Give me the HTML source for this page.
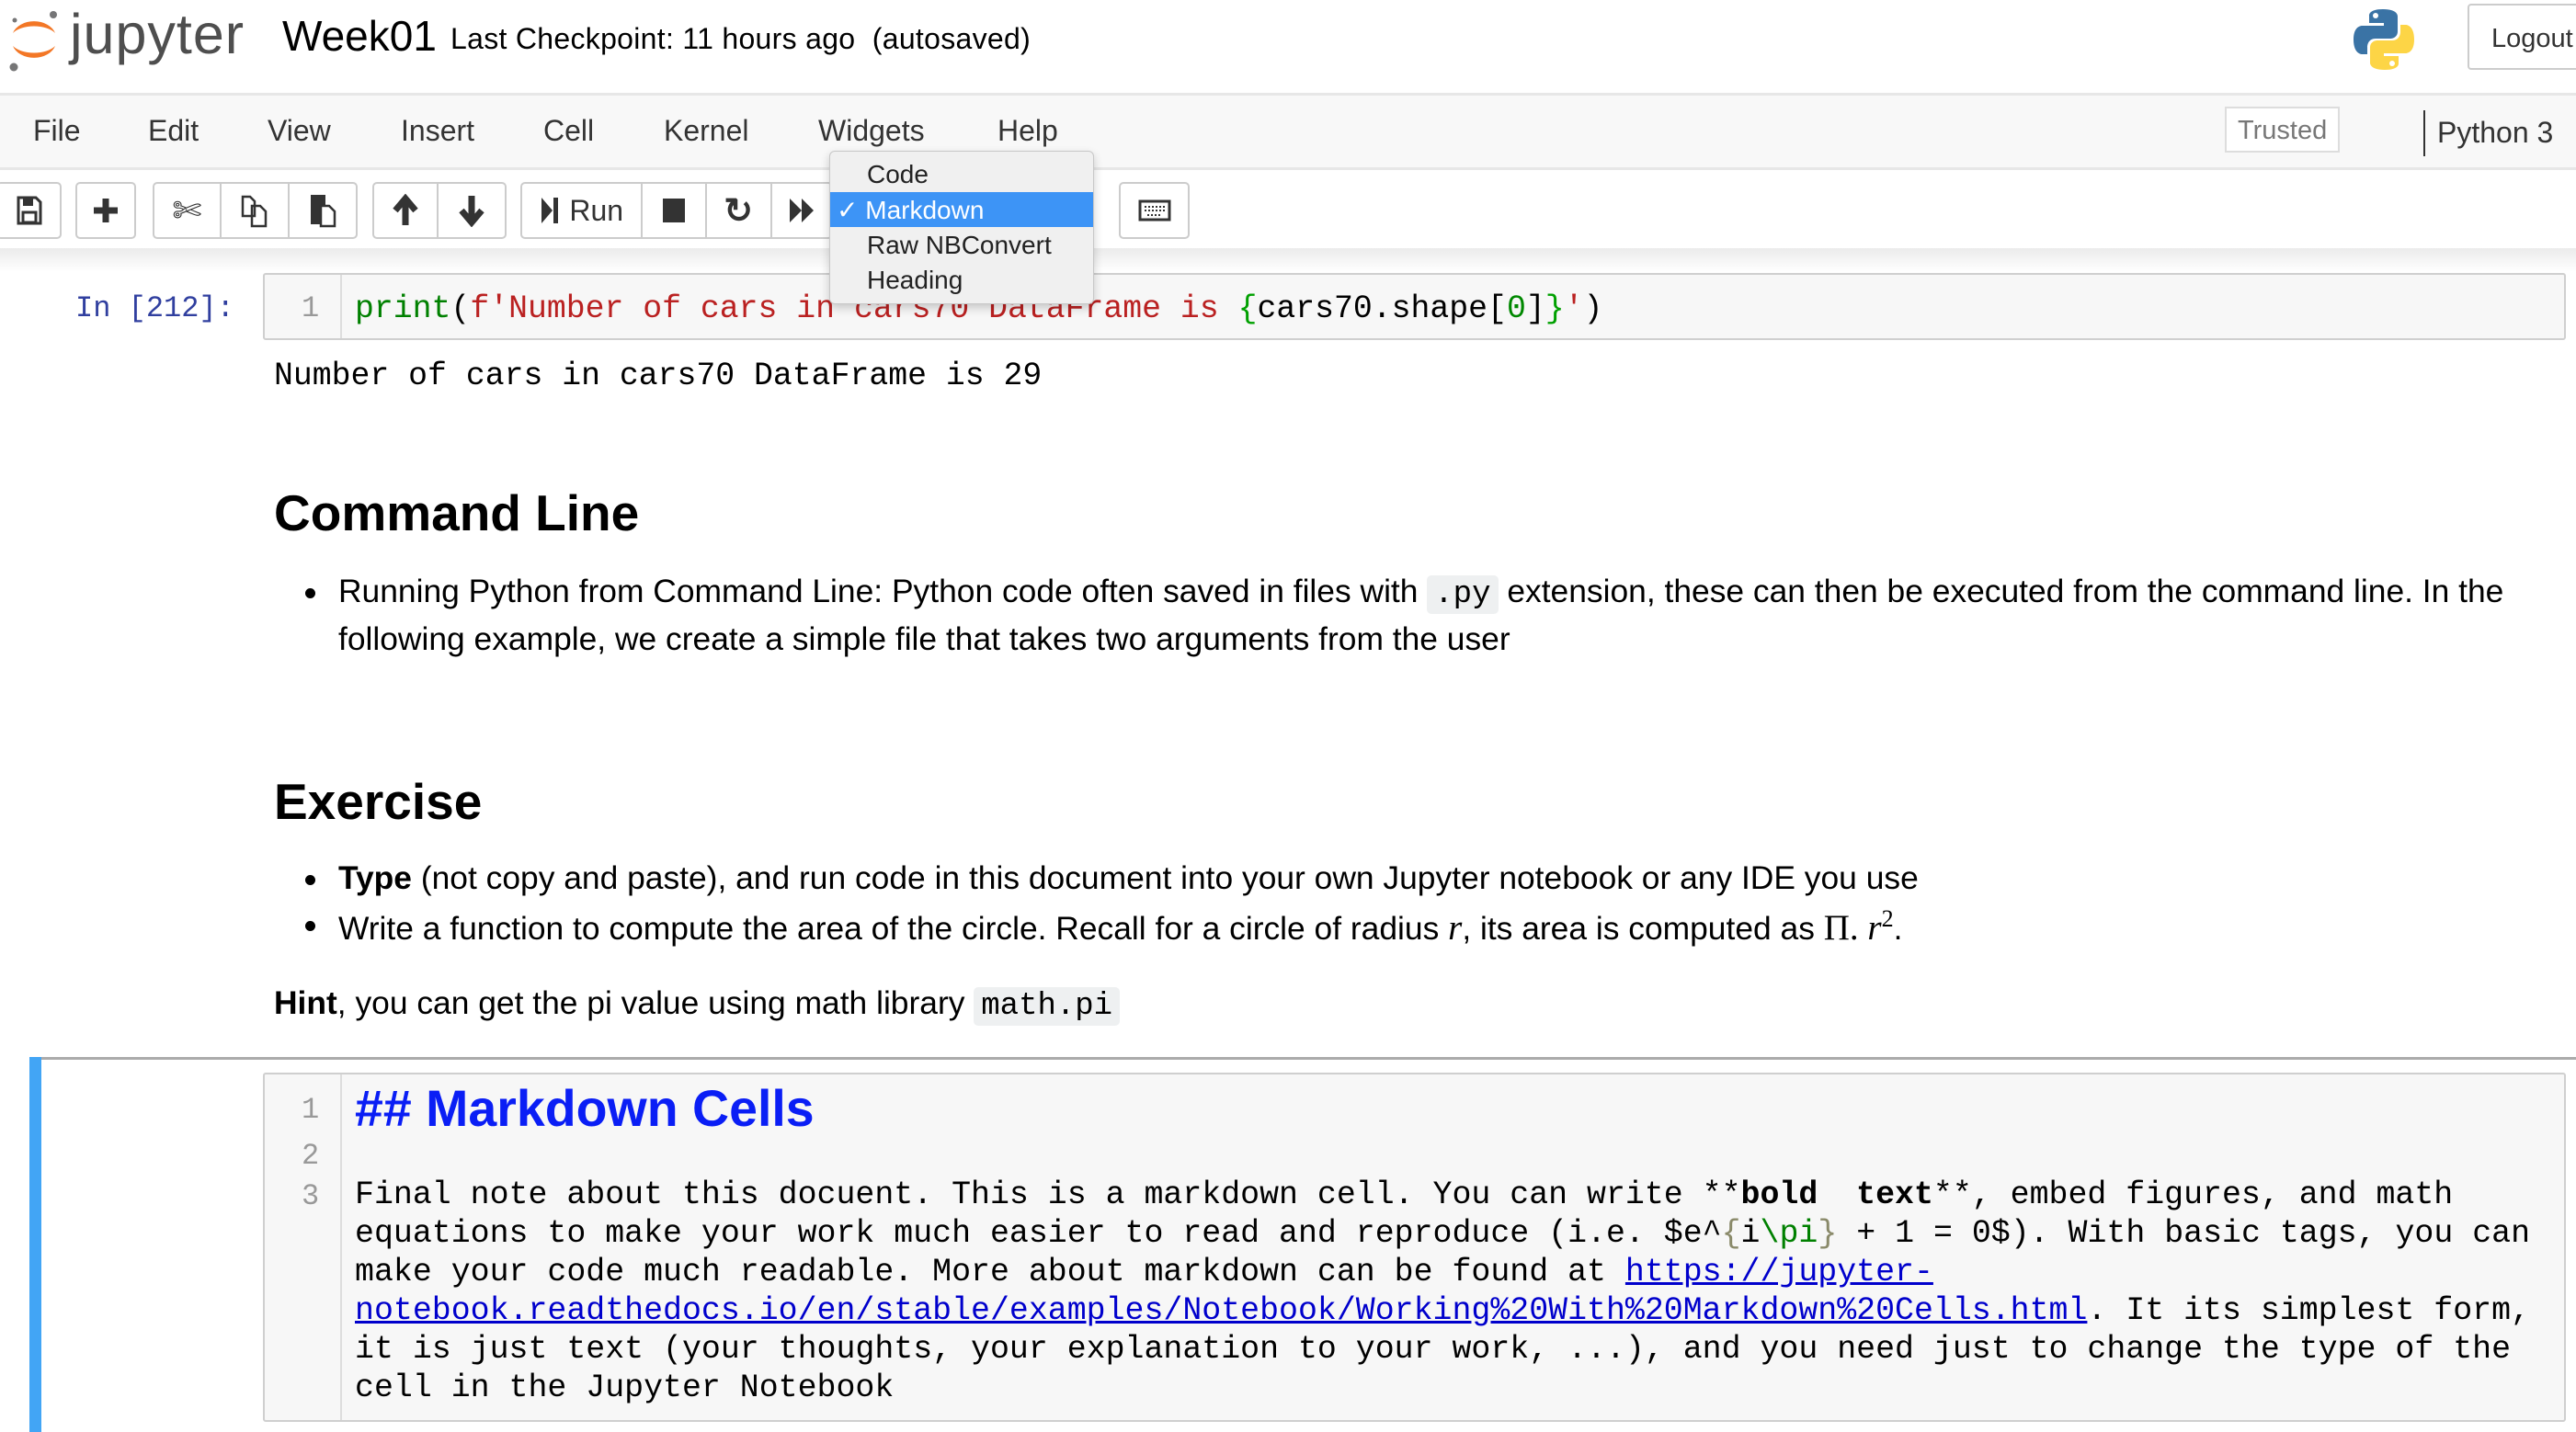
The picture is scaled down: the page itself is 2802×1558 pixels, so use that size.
<!DOCTYPE html>
<html><head><meta charset="utf-8"><style>
*{margin:0;padding:0;box-sizing:border-box}
body{width:2802px;height:1558px;overflow:hidden;background:#fff;font-family:"Liberation Sans",Arial,sans-serif;color:#000;position:relative}
.a{position:absolute;white-space:nowrap}
.mono{font-family:"Liberation Mono",monospace}
.menu{font-size:32px;color:#333;top:124px}
.grp{position:absolute;top:198px;height:62px;border:2px solid #ccc;border-radius:5px;background:#fff;display:flex}
.grp div{height:100%;border-right:2px solid #ccc;display:flex;align-items:center;justify-content:center}
.grp div:last-child{border-right:none}
.b{font-size:35.4px;color:#000}
.h{font-size:55px;font-weight:bold}
.dot{position:absolute;width:11px;height:11px;border-radius:50%;background:#000}
.code{background:#eef0f1;border-radius:5px;padding:2px 8px;font-family:"Liberation Mono",monospace;font-size:34px}
.ml{font-size:34.9px;left:386px}
</style></head><body>

<svg class="a" style="left:6px;top:6px" width="62" height="72" viewBox="0 0 62 72">
<path d="M8 30 A24 18 0 0 1 54 30 A26 14 0 0 0 8 30Z" fill="#f37726"/>
<path d="M8 44 A24 18 0 0 0 54 44 A26 14 0 0 1 8 44Z" fill="#f37726"/>
<circle cx="52" cy="10" r="4" fill="#767677"/><circle cx="9" cy="67" r="4.5" fill="#767677"/><circle cx="10" cy="16" r="2.5" fill="#767677"/>
</svg>
<div class="a" style="left:76px;top:2px;font-size:61px;color:#4e4e4e;letter-spacing:1px">jupyter</div>
<div class="a" style="left:307px;top:12px;font-size:46px">Week01</div>
<div class="a" style="left:490px;top:24px;font-size:32px;letter-spacing:0.3px">Last Checkpoint: 11 hours ago &nbsp;(autosaved)</div>
<svg class="a" style="left:2558px;top:8px" width="70" height="70" viewBox="0 0 70 70">
<path d="M34 2C18 2 19 9 19 9v8h16v3H12S2 19 2 35s9 16 9 16h6v-8s0-9 9-9h16s8 0 8-8V10S51 2 34 2z" fill="#3a73a5"/>
<circle cx="26" cy="9" r="3" fill="#fff"/>
<path d="M36 68c16 0 15-7 15-7v-8H35v-3h23s10 1 10-15-9-16-9-16h-6v8s0 9-9 9H28s-8 0-8 8v16s-1 8 16 8z" fill="#fdd546"/>
<circle cx="44" cy="61" r="3" fill="#fff"/>
</svg>
<div class="a" style="left:2684px;top:4px;width:140px;height:72px;border:2px solid #ccc;border-radius:4px;font-size:29px;padding:20px 0 0 24px;color:#333">Logout</div>

<div class="a" style="left:0;top:101px;width:2802px;height:84px;background:#f8f8f8;border-top:3px solid #e7e7e7;border-bottom:3px solid #e7e7e7"></div>
<div class="a menu" style="left:36px">File</div>
<div class="a menu" style="left:161px">Edit</div>
<div class="a menu" style="left:291px">View</div>
<div class="a menu" style="left:436px">Insert</div>
<div class="a menu" style="left:591px">Cell</div>
<div class="a menu" style="left:722px">Kernel</div>
<div class="a menu" style="left:890px">Widgets</div>
<div class="a menu" style="left:1085px">Help</div>
<div class="a" style="left:2420px;top:116px;width:125px;height:50px;border:2px solid #ddd;background:#fff;font-size:29px;color:#777;padding:8px 0 0 12px">Trusted</div>
<div class="a" style="left:2636px;top:120px;width:2px;height:50px;background:#333"></div>
<div class="a" style="left:2651px;top:126px;font-size:32px;color:#333">Python 3</div>

<div class="a" style="left:0;top:270px;width:2802px;height:26px;background:linear-gradient(#ebebeb,#fff)"></div>
<div class="grp" style="left:-4px;width:71px"><div style="width:71px"><svg width="28" height="32" viewBox="0 0 28 32"><path d="M2 2h19l5 5v23H2z" fill="none" stroke="#333" stroke-width="3"/><rect x="7" y="3" width="11" height="8" fill="#333"/><rect x="7" y="18" width="14" height="11" fill="none" stroke="#333" stroke-width="3"/></svg></div></div>
<div class="grp" style="left:82px;width:66px"><div style="width:66px"><svg width="30" height="30"><path d="M15 2v26M2 15h26" stroke="#333" stroke-width="7"/></svg></div></div>
<div class="grp" style="left:166px;width:223px"><div style="width:74px;font-size:38px;color:#333">✄</div><div style="width:76px"><svg width="30" height="38" viewBox="0 0 30 38"><path d="M2 4h8l5 5v16H2z M12 14h9l6 6v16H12z" fill="#fff" stroke="#333" stroke-width="2.5"/></svg></div><div style="width:73px"><svg width="30" height="38" viewBox="0 0 30 38"><rect x="2" y="2" width="16" height="32" fill="#333"/><path d="M13 14h9l6 6v16H13z" fill="#fff" stroke="#333" stroke-width="2.5"/></svg></div></div>
<div class="grp" style="left:405px;width:146px"><div style="width:72px"><svg width="30" height="36"><path d="M15 34V8M4 18L15 5l11 13" stroke="#333" stroke-width="7" fill="none"/></svg></div><div style="width:74px"><svg width="30" height="36"><path d="M15 2v26M4 18l11 13 11-13" stroke="#333" stroke-width="7" fill="none"/></svg></div></div>
<div class="grp" style="left:566px;width:340px"><div style="width:133px;font-size:32px;color:#333"><svg width="22" height="34" style="margin-right:10px"><path d="M2 3l12 14L2 31z" fill="#333"/><rect x="15" y="3" width="5" height="28" fill="#333"/></svg>Run</div><div style="width:70px"><svg width="28" height="30"><rect x="2" y="2" width="24" height="26" fill="#333"/></svg></div><div style="width:72px;font-size:38px;font-weight:bold;color:#333">↻</div><div style="width:65px"><svg width="30" height="30"><path d="M2 2l13 13L2 28zM15 2l13 13-13 13z" fill="#333"/></svg></div></div>
<div class="grp" style="left:1217px;width:77px"><div style="width:77px"><svg width="36" height="24"><rect x="2" y="2" width="32" height="20" fill="none" stroke="#333" stroke-width="3"/><path d="M7 8h22M7 12h22M10 17h16" stroke="#333" stroke-width="2" stroke-dasharray="2 2"/></svg></div></div>

<div class="a mono" style="left:82px;top:317px;font-size:32px;color:#303f9f">In [212]:</div>
<div class="a" style="left:286px;top:297px;width:2505px;height:73px;background:#f7f7f7;border:2px solid #cfcfcf;border-radius:3px"></div>
<div class="a" style="left:370px;top:299px;width:2px;height:69px;background:#ddd"></div>
<div class="a mono" style="left:328px;top:317px;font-size:32px;color:#999">1</div>
<div class="a mono" style="left:386px;top:317px;font-size:34.8px"><span style="color:#008000">print</span>(<span style="color:#ba2121">f'Number of cars in cars70 DataFrame is </span><span style="color:#00a000">{</span>cars70.shape[<span style="color:#008800">0</span>]<span style="color:#00a000">}</span><span style="color:#ba2121">'</span>)</div>
<div class="a mono" style="left:298px;top:390px;font-size:34.8px">Number of cars in cars70 DataFrame is 29</div>

<div class="a" style="left:902px;top:164px;width:288px;height:167px;background:#f0f0f0;border:1px solid #c8c8c8;border-radius:6px;box-shadow:0 4px 10px rgba(0,0,0,.2)"></div>
<div class="a" style="left:903px;top:209px;width:286px;height:38px;background:#3d94f6"></div>
<div class="a" style="left:943px;top:174px;font-size:28px;color:#222">Code</div>
<div class="a" style="left:910px;top:212px;font-size:28px;color:#fff">✓ Markdown</div>
<div class="a" style="left:943px;top:251px;font-size:28px;color:#222">Raw NBConvert</div>
<div class="a" style="left:943px;top:289px;font-size:28px;color:#222">Heading</div>

<div class="a h" style="left:298px;top:526px">Command Line</div>
<div class="dot" style="left:332px;top:640px"></div>
<div class="a b" style="left:368px;top:623px">Running Python from Command Line: Python code often saved in files with <span class="code">.py</span> extension, these can then be executed from the command line. In the</div>
<div class="a b" style="left:368px;top:675px">following example, we create a simple file that takes two arguments from the user</div>
<div class="a h" style="left:298px;top:840px">Exercise</div>
<div class="dot" style="left:332px;top:952px"></div>
<div class="a b" style="left:368px;top:935px"><b>Type</b> (not copy and paste), and run code in this document into your own Jupyter notebook or any IDE you use</div>
<div class="dot" style="left:332px;top:1002px"></div>
<div class="a b" style="left:368px;top:985px">Write a function to compute the area of the circle. Recall for a circle of radius <i style="font-family:'Liberation Serif',serif;font-size:39px">r</i>, its area is computed as <span style="font-family:'Liberation Serif',serif;font-size:39px">Π. <i>r</i><sup style="font-size:26px">2</sup></span>.</div>
<div class="a b" style="left:298px;top:1071px"><b>Hint</b>, you can get the pi value using math library <span class="code">math.pi</span></div>

<div class="a" style="left:32px;top:1150px;width:2770px;height:3px;background:#ababab"></div>
<div class="a" style="left:32px;top:1150px;width:13px;height:408px;background:#42a5f5"></div>
<div class="a" style="left:286px;top:1167px;width:2505px;height:380px;background:#f7f7f7;border:2px solid #cfcfcf;border-radius:3px"></div>
<div class="a" style="left:370px;top:1169px;width:2px;height:376px;background:#ddd"></div>
<div class="a mono" style="left:328px;top:1189px;font-size:32px;color:#999">1</div>
<div class="a mono" style="left:328px;top:1239px;font-size:32px;color:#999">2</div>
<div class="a mono" style="left:328px;top:1283px;font-size:32px;color:#999">3</div>
<div class="a" style="left:386px;top:1174px;font-size:55.5px;font-weight:bold;color:#0a1ef5">## Markdown Cells</div>
<div class="a mono ml" style="top:1280px;line-height:42px">Final note about this docuent. This is a markdown cell. You can write **<b>bold&nbsp; text</b>**, embed figures, and math<br>equations to make your work much easier to read and reproduce (i.e. $e^<span style="color:#8a8a6a">{</span>i<span style="color:#008000">\pi</span><span style="color:#8a8a6a">}</span> + 1 = 0$). With basic tags, you can<br>make your code much readable. More about markdown can be found at <u style="color:#0000cc">https://jupyter-</u><br><u style="color:#0000cc">notebook.readthedocs.io/en/stable/examples/Notebook/Working%20With%20Markdown%20Cells.html</u>. It its simplest form,<br>it is just text (your thoughts, your explanation to your work, ...), and you need just to change the type of the<br>cell in the Jupyter Notebook</div>
</body></html>
